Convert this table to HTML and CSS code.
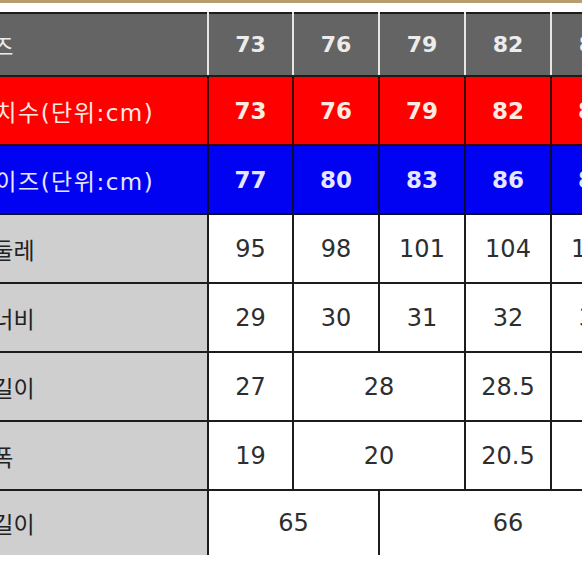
FILE: index.html
```html
<!DOCTYPE html>
<html lang="ko">
<head>
<meta charset="utf-8">
<title>사이즈표</title>
<link rel="stylesheet" href="styles.css">
</head>
<body>
<div class="strip"></div>
<div class="frame">
  <table class="chart">
    <colgroup>
      <col class="c-label">
      <col class="c-a"><col class="c-b"><col class="c-b"><col class="c-b"><col class="c-b"><col class="c-b">
    </colgroup>
    <tr class="r-head">
      <td class="lbl">사이즈</td>
      <td>73</td><td>76</td><td>79</td><td>82</td><td>85</td><td>88</td>
    </tr>
    <tr class="r-red">
      <td class="lbl">표기치수(단위:cm)</td>
      <td>73</td><td>76</td><td>79</td><td>82</td><td>85</td><td>88</td>
    </tr>
    <tr class="r-blue">
      <td class="lbl">실사이즈(단위:cm)</td>
      <td>77</td><td>80</td><td>83</td><td>86</td><td>89</td><td>92</td>
    </tr>
    <tr class="r-body">
      <td class="lbl">허리둘레</td>
      <td>95</td><td>98</td><td>101</td><td>104</td><td>107</td><td>110</td>
    </tr>
    <tr class="r-body">
      <td class="lbl">허벅너비</td>
      <td>29</td><td>30</td><td>31</td><td>32</td><td>33</td><td>34</td>
    </tr>
    <tr class="r-body">
      <td class="lbl">밑위길이</td>
      <td>27</td><td colspan="2">28</td><td>28.5</td><td colspan="2">29</td>
    </tr>
    <tr class="r-body">
      <td class="lbl">밑단폭</td>
      <td>19</td><td colspan="2">20</td><td>20.5</td><td colspan="2">21</td>
    </tr>
    <tr class="r-body r-last">
      <td class="lbl">전체길이</td>
      <td colspan="2">65</td><td colspan="3">66</td><td>67</td>
    </tr>
  </table>
</div>
</body>
</html>
```
FILE: styles.css
```css
html, body {
  margin: 0;
  padding: 0;
  background: #ffffff;
  overflow: hidden;
  width: 582px;
  height: 582px;
}

.strip {
  height: 3px;
  background: #b89d6e;
  margin-bottom: 9px;
}

.frame {
  overflow: hidden;
  width: 582px;
}

.chart {
  margin-left: -60px;
  border-collapse: collapse;
  table-layout: fixed;
  width: 782px;
  font-family: "DejaVu Sans", "Noto Sans CJK KR", sans-serif;
  font-size: 24px;
}

.c-label { width: 267px; }
.c-a { width: 85px; }
.c-b { width: 86px; }

.chart td {
  border: 2px solid #1c1c1c;
  text-align: center;
  vertical-align: middle;
  padding: 0;
  color: #2e2e2e;
  white-space: nowrap;
  overflow: hidden;
}

.chart td.lbl {
  text-align: left;
  padding-left: 8px;
  font-family: "DejaVu Sans", "Noto Sans CJK KR", sans-serif;
  font-size: 23px;
}

.r-head td {
  height: 61px;
  background: #646464;
  color: #ececec;
  font-weight: bold;
  font-size: 22px;
  border-left-color: #e6e6e6;
  border-right-color: #e6e6e6;
}
.r-head td.lbl {
  font-weight: normal;
  border-left-color: #1c1c1c;
}

.r-red td {
  height: 67px;
  background: #fe0000;
  color: #ffeae2;
  font-weight: bold;
  font-size: 23px;
  border-color: #3a0000;
}
.r-red td.lbl {
  font-weight: normal;
  letter-spacing: 1.5px;
}

.r-blue td {
  height: 67px;
  background: #0202f2;
  color: #e6e6ff;
  font-weight: bold;
  font-size: 23px;
  border-color: #0c0c30;
}
.r-blue td.lbl {
  font-weight: normal;
  letter-spacing: 1.5px;
}

.r-body td {
  height: 67px;
  background: #ffffff;
}
.r-body td.lbl {
  background: #cfcfcf;
  color: #222222;
}

.r-last td {
  height: 64px;
  border-bottom: none;
}
```
